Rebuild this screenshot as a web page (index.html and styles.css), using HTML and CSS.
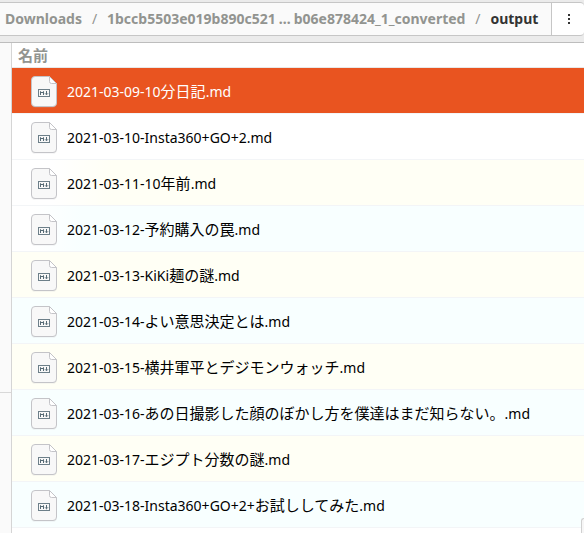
FILE: index.html
```html
<!DOCTYPE html>
<html lang="ja">
<head>
<meta charset="utf-8">
<title>output</title>
<link rel="stylesheet" href="styles.css">
</head>
<body>
<svg class="defs" aria-hidden="true">
  <symbol id="md-file" viewBox="0 0 28 32">
    <path d="M4.500 2H19.500L26.500 8.500V28Q26.500 31.500 23 31.500H4.500Q1.500 31.500 1.500 28V5Q1.500 2 4.500 2Z" fill="#000" opacity=".12"/>
    <path d="M5 .5H19.500L26.500 7.500V27Q26.500 30.500 23 30.500H5Q1.500 30.500 1.500 27V4Q1.500 .5 5 .5Z" fill="#f8f8f8"/>
    <path d="M19.500 .5V5.500Q19.500 7.500 21.500 7.500H26.500Z" fill="#fff"/>
    <rect x="8.500" y="13.500" width="11" height="7" fill="none" stroke="#6d7f89"/>
    <path d="M10.500 19V15.500L12 17L13.500 15.500V19M16.500 15V18.500M15 17.300L16.500 18.800L18 17.300" fill="none" stroke="#566a75"/>
  </symbol>
</svg>
<header class="toolbar">
  <nav class="path" aria-label="パス">
    <a href="#">Downloads</a><span class="sep">/</span><a href="#">1bccb5503e019b890c521<span class="gap">…</span>b06e878424_1_converted</a><span class="sep">/</span><a href="#" class="current">output</a>
  </nav>
  <button class="menu" aria-label="メニュー"><svg width="4" height="12" viewBox="0 0 4 12"><path d="M1 1h2v2H1zM1 5h2v2H1zM1 9h2v2H1z" fill="#333"/></svg></button>
</header>
<div class="content">
  <aside class="sidebar"><div class="places"></div><div class="other"></div></aside>
  <main class="files">
    <table>
      <thead><tr><th scope="col">名前</th></tr></thead>
      <tbody>
        <tr class="selected"><td><div class="file"><svg class="icon"><use href="#md-file"/></svg><span>2021-03-09-10<span class="ja">分日記</span>.md</span></div></td></tr>
        <tr><td><div class="file"><svg class="icon"><use href="#md-file"/></svg><span>2021-03-10-Insta360+GO+2.md</span></div></td></tr>
        <tr><td><div class="file"><svg class="icon"><use href="#md-file"/></svg><span>2021-03-11-10<span class="ja">年前</span>.md</span></div></td></tr>
        <tr><td><div class="file"><svg class="icon"><use href="#md-file"/></svg><span>2021-03-12-<span class="ja">予約購入の罠</span>.md</span></div></td></tr>
        <tr><td><div class="file"><svg class="icon"><use href="#md-file"/></svg><span>2021-03-13-KiKi<span class="ja">麺の謎</span>.md</span></div></td></tr>
        <tr><td><div class="file"><svg class="icon"><use href="#md-file"/></svg><span>2021-03-14-<span class="ja">よい意思決定とは</span>.md</span></div></td></tr>
        <tr><td><div class="file"><svg class="icon"><use href="#md-file"/></svg><span>2021-03-15-<span class="ja">横井軍平とデジモンウォッチ</span>.md</span></div></td></tr>
        <tr><td><div class="file"><svg class="icon"><use href="#md-file"/></svg><span>2021-03-16-<span class="ja">あの日撮影した顔のぼかし方を僕達はまだ知らない。</span>.md</span></div></td></tr>
        <tr><td><div class="file"><svg class="icon"><use href="#md-file"/></svg><span>2021-03-17-<span class="ja">エジプト分数の謎</span>.md</span></div></td></tr>
        <tr><td><div class="file"><svg class="icon"><use href="#md-file"/></svg><span>2021-03-18-Insta360+GO+2+<span class="ja">お試ししてみた</span>.md</span></div></td></tr>
      </tbody>
    </table>
    <div class="status"></div>
  </main>
</div>
</body>
</html>
```
FILE: styles.css
```css
* { box-sizing: border-box; }
body {
  margin: 0;
  min-height: 100vh;
  display: flex;
  flex-direction: column;
  overflow: hidden;
  background: #fff;
  color: #000;
  font: 14px/20px "Noto Sans", "Noto Sans CJK JP", sans-serif;
}
.defs { position: absolute; width: 0; height: 0; }
.toolbar {
  display: flex;
  padding: 2px 0 6px;
  background: #ebebeb;
  border-bottom: 1px solid #bdbdbd;
}
.path {
  flex: 1;
  display: flex;
  align-items: center;
  height: 34px;
  padding-left: 5px;
  background: #fafafa;
  border: 1px solid #c6c6c6;
  border-width: 1px 0;
  font-weight: 700;
  white-space: nowrap;
}
.path a { color: #929490; text-decoration: none; }
.path .current { color: #333; }
.gap { padding: 0 3px; }
.sep { width: 25px; text-align: center; color: #929490; font-weight: 400; }
.menu {
  display: flex;
  align-items: center;
  justify-content: center;
  width: 33px;
  height: 34px;
  padding: 0 0 0 2px;
  background: #fff;
  border: 1px solid #c6c6c6;
  border-right: 0;
  border-radius: 0 4px 4px 0;
}
.content { flex: 1; display: flex; }
.sidebar {
  width: 12px;
  display: flex;
  flex-direction: column;
  background: #fafafa;
  border-right: 1px solid #d5d5d5;
}
.places { height: 350px; border-bottom: 1px solid #d8d8d8; }
.files { flex: 1; position: relative; }
table { width: 100%; border-spacing: 0; }
th {
  height: 25px;
  padding: 0 6px;
  text-align: left;
  font-size: 15px;
  color: #929490;
  border-bottom: 1px solid #e8e8e8;
}
td { height: 46px; padding: 0; border-bottom: 1px solid #f3f5f7; }
tbody tr:nth-child(n+3) { background: #fffff5; }
tbody tr:nth-child(2n+4) { background: #f8ffff; }
tbody tr:nth-child(3) { background: linear-gradient(90deg, #fff 40px, #fffff5 100px); }
tbody tr:nth-child(4) { background: linear-gradient(90deg, #fff 20px, #f8ffff 70px); }
tbody .selected { background: #e95420; color: #fff; }
.file { display: flex; align-items: center; gap: 9px; padding: 2px 0 0 18px; white-space: nowrap; }
.icon { width: 28px; height: 32px; stroke: #c4c4c8; }
.ja { font-size: 15px; }
.status {
  position: absolute;
  right: 0;
  bottom: 0;
  width: 3px;
  height: 15px;
  background: #f6f6f6;
  border: 1px solid #d0d0d0;
  border-width: 1px 0 0 1px;
  border-radius: 3px 0 0;
}
```
